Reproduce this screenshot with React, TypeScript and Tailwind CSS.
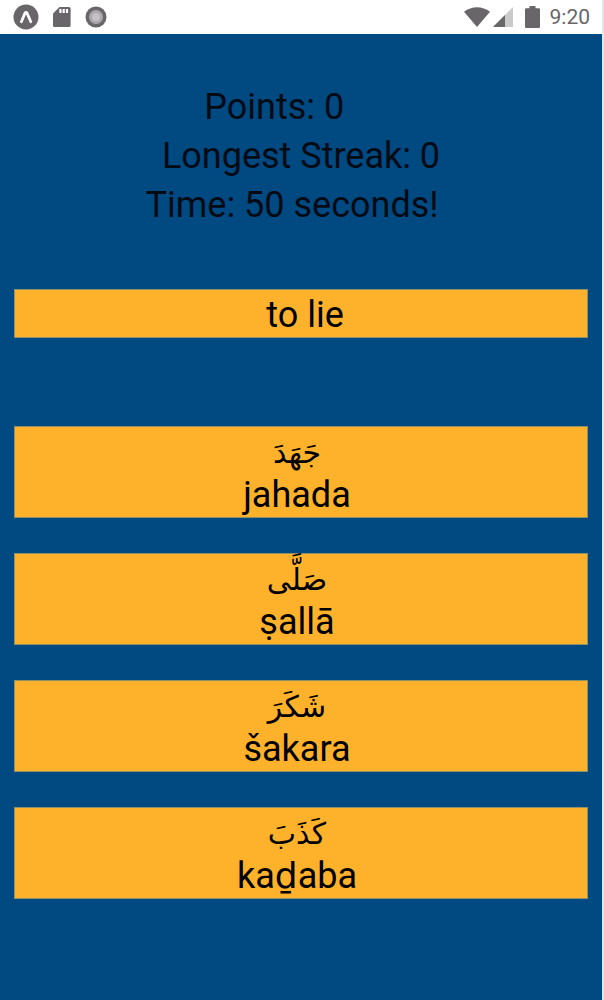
import React from 'react';

const answers = [
  { arabic: 'جَهَدَ', latin: 'jahada' },
  { arabic: 'صَلَّى', latin: 'ṣallā' },
  { arabic: 'شَكَرَ', latin: 'šakara' },
  { arabic: 'كَذَبَ', latin: 'kaḏaba' },
];

const StatusBar: React.FC = () => (
  <header className="flex h-[34px] items-center justify-between bg-white pl-[13px] pr-3 text-[#69666a]">
    <div className="flex items-center gap-[14px]">
      <svg width="26" height="26" viewBox="0 0 26 26" aria-hidden="true">
        <circle cx="13" cy="13" r="12.5" fill="currentColor" />
        <path d="M8.400 17.800 12 9Q13 7.800 14 9L17.800 17.800" fill="none" stroke="#fff" strokeWidth="2.8" strokeLinecap="round" strokeLinejoin="round" />
      </svg>
      <svg width="18" height="22" viewBox="0 0 18 22" aria-hidden="true">
        <path d="M6.5 1H16a1.6 1.6 0 0 1 1.6 1.6v16.8A1.6 1.6 0 0 1 16 21H1.6A1.6 1.6 0 0 1 0 19.4V7.5Z" fill="currentColor" />
        <path d="M6.3 3h2.2v4H6.3ZM9.6 3h2.2v4H9.6ZM12.9 3h2.2v4h-2.2Z" fill="#fff" />
      </svg>
      <svg width="22" height="22" viewBox="0 0 22 22" aria-hidden="true">
        <circle cx="11" cy="11" r="10.5" fill="currentColor" />
        <circle cx="11" cy="11" r="7" fill="#aaa8aa" />
        <circle cx="11" cy="11" r="4" fill="#c4c2c4" />
      </svg>
    </div>
    <div className="flex items-center">
      <svg width="26" height="20" viewBox="0 0 26 20" aria-hidden="true">
        <path d="M0 4.8C7.5-1.4 18.5-1.4 26 4.8L13 20Z" fill="currentColor" />
      </svg>
      <svg className="ml-[3px]" width="20" height="20" viewBox="0 0 20 20" aria-hidden="true">
        <path d="M0 20 20 0V20Z" fill="#cbcacb" />
        <path d="M0 20 12 8V20Z" fill="currentColor" />
      </svg>
      <svg className="ml-3" width="15" height="22" viewBox="0 0 15 22" aria-hidden="true">
        <path d="M4.5 0h6v2.2h3.3a1.2 1.2 0 0 1 1.2 1.2v17.4a1.2 1.2 0 0 1-1.2 1.2H1.2A1.2 1.2 0 0 1 0 20.8V3.4a1.2 1.2 0 0 1 1.2-1.2h3.3Z" fill="currentColor" />
      </svg>
      <span className="ml-[10px] text-[21px] leading-6">9:20</span>
    </div>
  </header>
);

export default function App() {
  return (
    <div className="min-h-screen bg-[#dde6eb] pr-[2px] font-['Roboto','DejaVu_Sans',sans-serif] text-black">
      <div className="flex min-h-screen flex-col bg-[#004981]">
        <StatusBar />
        <main className="flex flex-col px-[14px] pt-[49px] pb-10 text-4xl">
          {/* Score lines keep their trailing spaces */}
          <div className="text-center leading-[49px] whitespace-pre text-[#020a14]">
            <p>{'Points: 0\u00a0\u00a0\u00a0\u00a0\u00a0\u00a0'}</p>
            <p>Longest Streak: 0</p>
            <p>{'Time: 50 seconds!\u00a0\u00a0'}</p>
          </div>

          <h1 className="mt-[59px] border border-[#8d9068] bg-[#feb12a] pt-1 pl-2 text-center leading-[43px]">to lie</h1>

          <div className="mt-[88px] flex flex-col gap-[35px]">
            {answers.map((a) => (
              <button key={a.latin} type="button" className="flex flex-col items-center border border-[#8d9068] bg-[#feb12a] pt-[5px] pr-2">
                <span lang="ar" dir="rtl" className="text-[30px] leading-[41px]">{a.arabic}</span>
                <span className="leading-[44px]">{a.latin}</span>
              </button>
            ))}
          </div>
        </main>
      </div>
    </div>
  );
}
